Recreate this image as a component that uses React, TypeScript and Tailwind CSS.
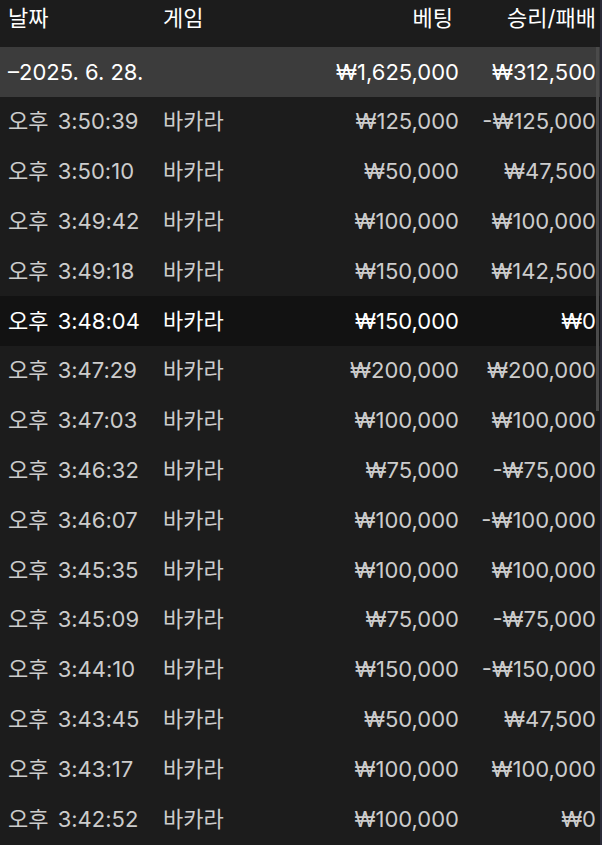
const rows: [string, string, string, boolean?][] = [
  ["오후 3:50:39", "₩125,000", "-₩125,000"],
  ["오후 3:50:10", "₩50,000", "₩47,500"],
  ["오후 3:49:42", "₩100,000", "₩100,000"],
  ["오후 3:49:18", "₩150,000", "₩142,500"],
  ["오후 3:48:04", "₩150,000", "₩0", true],
  ["오후 3:47:29", "₩200,000", "₩200,000"],
  ["오후 3:47:03", "₩100,000", "₩100,000"],
  ["오후 3:46:32", "₩75,000", "-₩75,000"],
  ["오후 3:46:07", "₩100,000", "-₩100,000"],
  ["오후 3:45:35", "₩100,000", "₩100,000"],
  ["오후 3:45:09", "₩75,000", "-₩75,000"],
  ["오후 3:44:10", "₩150,000", "-₩150,000"],
  ["오후 3:43:45", "₩50,000", "₩47,500"],
  ["오후 3:43:17", "₩100,000", "₩100,000"],
  ["오후 3:42:52", "₩100,000", "₩0"],
];

export default function App() {
  return (
    <div
      className="relative h-[845px] w-[602px] overflow-hidden border-r-2 border-[#2b2b38] bg-[#1c1c1c] text-[22px] text-[#cccccc]"
      style={{ fontFamily: 'Inter, "Noto Sans CJK KR", sans-serif' }}
    >
      <div className="flex h-[47px] items-center pb-[10px] pl-2 pr-[4px] text-white">
        <div className="w-[155px]">날짜</div>
        <div className="flex-1">게임</div>
        <div className="pr-[6px] text-right">베팅</div>
        <div className="w-[137px] text-right">승리/패배</div>
      </div>
      <div className="flex h-[50px] items-center bg-[#3c3c3c] pl-2 pr-[4px] text-white">
        <div className="flex-1">–2025. 6. 28.</div>
        <div className="text-right">₩1,625,000</div>
        <div className="w-[137px] text-right">₩312,500</div>
      </div>
      {rows.map(([time, bet, result, active]) => (
        <div
          key={time}
          className={
            active
              ? "flex h-[49.8px] items-center bg-[#121212] pl-2 pr-[4px] text-white"
              : "flex h-[49.8px] items-center pl-2 pr-[4px]"
          }
        >
          <div className="w-[155px] [word-spacing:3px]">{time}</div>
          <div className="flex-1">바카라</div>
          <div className="text-right">{bet}</div>
          <div className="w-[137px] text-right">{result}</div>
        </div>
      ))}
      <div className="absolute right-[1px] top-[47px] h-[364px] w-[3px] bg-[#4a4a4a]" />
    </div>
  );
}
